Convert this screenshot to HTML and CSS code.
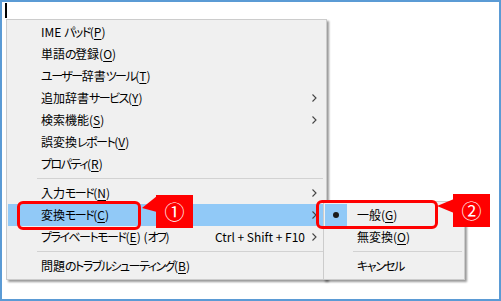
FILE: index.html
```html
<!DOCTYPE html>
<html lang="ja">
<head>
<meta charset="utf-8">
<link rel="stylesheet" href="styles.css">
</head>
<body>
<div class="screen">
  <div class="caret"></div>

  <div class="menu main-menu">
    <div class="item"><span class="label">IME <span class="kana">パッド</span>(<u>P</u>)</span></div>
    <div class="item"><span class="label">単語<span class="kana">の</span>登録(<u>O</u>)</span></div>
    <div class="item"><span class="label"><span class="kana">ユーザー</span>辞書<span class="kana">ツール</span>(<u>T</u>)</span></div>
    <div class="item"><span class="label">追加辞書<span class="kana">サービス</span>(<u>Y</u>)</span><span class="arrow"><svg width="5" height="8" viewBox="0 0 5 8"><path d="M0.5 0.5 L4 4 L0.5 7.5" fill="none" stroke="#444" stroke-width="1.1"/></svg></span></div>
    <div class="item"><span class="label">検索機能(<u>S</u>)</span><span class="arrow"><svg width="5" height="8" viewBox="0 0 5 8"><path d="M0.5 0.5 L4 4 L0.5 7.5" fill="none" stroke="#444" stroke-width="1.1"/></svg></span></div>
    <div class="item"><span class="label">誤変換<span class="kana">レポート</span>(<u>V</u>)</span></div>
    <div class="item"><span class="label"><span class="kana">プロパティ</span>(<u>R</u>)</span></div>
    <div class="sep"></div>
    <div class="item"><span class="label">入力<span class="kana">モード</span>(<u>N</u>)</span><span class="arrow"><svg width="5" height="8" viewBox="0 0 5 8"><path d="M0.5 0.5 L4 4 L0.5 7.5" fill="none" stroke="#444" stroke-width="1.1"/></svg></span></div>
    <div class="item active"><span class="label">変換<span class="kana">モード</span>(<u>C</u>)</span><span class="arrow"><svg width="5" height="8" viewBox="0 0 5 8"><path d="M0.5 0.5 L4 4 L0.5 7.5" fill="none" stroke="#444" stroke-width="1.1"/></svg></span></div>
    <div class="item"><span class="label"><span class="kana">プライベートモード</span>(<u>E</u>) (<span class="kana">オフ</span>)</span><span class="shortcut">Ctrl + Shift + F10</span><span class="arrow"><svg width="5" height="8" viewBox="0 0 5 8"><path d="M0.5 0.5 L4 4 L0.5 7.5" fill="none" stroke="#444" stroke-width="1.1"/></svg></span></div>
    <div class="sep"></div>
    <div class="item"><span class="label">問題<span class="kana">のトラブルシューティング</span>(<u>B</u>)</span></div>
  </div>

  <div class="menu sub-menu">
    <div class="sitem"><span class="check checked"><span class="dot"></span></span><span class="label">一般(<u>G</u>)</span></div>
    <div class="sitem"><span class="check"></span><span class="label">無変換(<u>O</u>)</span></div>
    <div class="ssep"></div>
    <div class="sitem"><span class="check"></span><span class="label"><span class="kana">キャンセル</span></span></div>
  </div>

  <div class="mark mark-1"></div>
  <div class="tag tag-1">①</div>
  <div class="mark mark-2"></div>
  <div class="tag tag-2">②</div>
</div>
</body>
</html>
```

FILE: styles.css
```css
* { box-sizing: border-box; }

html, body {
  margin: 0;
  padding: 0;
  background: #fff;
}

.screen {
  position: relative;
  width: 501px;
  height: 301px;
  border: 2px solid #5b9bd5;
  background: #fff;
  overflow: hidden;
  font-family: "Noto Sans CJK JP", "Noto Sans", sans-serif;
  font-size: 12px;
  font-feature-settings: "palt" 1;
  color: #000;
}

.caret {
  position: absolute;
  left: 3px;
  top: 1px;
  width: 2px;
  height: 15px;
  background: #000;
}

.menu {
  position: absolute;
  background: #f0f0f0;
  border: 1px solid #cccccc;
  box-shadow: 2px 2px 2px rgba(0, 0, 0, 0.4);
  display: flex;
  flex-direction: column;
}

.main-menu {
  left: 4px;
  top: 17px;
  width: 321px;
  padding: 1px 0 2px;
}

.item {
  display: flex;
  align-items: center;
  height: 22px;
  margin: 0 1px;
  padding: 0 8px 0 33px;
  line-height: 22px;
  white-space: nowrap;
}

.item.active {
  background: #91c9f7;
}

.label {
  flex: 1;
}

.kana {
  letter-spacing: -1.5px;
}

.label u {
  text-decoration-thickness: 1px;
  text-underline-offset: 2px;
}

.shortcut {
  margin-right: 7px;
}

.arrow {
  display: flex;
  align-items: center;
  width: 5px;
}

.sep {
  height: 1px;
  background: #d2d2d2;
  margin: 3px 3px 3px 30px;
}

.sub-menu {
  left: 321px;
  top: 199px;
  width: 142px;
  padding: 2px 0 2px;
}

.sitem {
  display: flex;
  align-items: center;
  height: 22px;
  margin: 0 1px;
  line-height: 22px;
  white-space: nowrap;
}

.check {
  width: 22px;
  height: 22px;
  margin-right: 10px;
  display: flex;
  align-items: center;
  justify-content: center;
}

.check.checked {
  background: #91c9f7;
}

.dot {
  width: 6px;
  height: 6px;
  border-radius: 50%;
  background: #1a1a1a;
}

.ssep {
  height: 1px;
  background: #d2d2d2;
  margin: 3px 2px 3px 29px;
}

.mark {
  position: absolute;
  border: 3px solid #ff0000;
  border-radius: 6px;
}

.mark-1 {
  left: 15px;
  top: 199px;
  width: 124px;
  height: 29px;
}

.mark-2 {
  left: 314px;
  top: 198px;
  width: 122px;
  height: 29px;
}

.tag {
  position: absolute;
  width: 37px;
  height: 33px;
  background: #ff0000;
  color: #fff;
  font-size: 20px;
  line-height: 33px;
  text-align: center;
}

.tag::before {
  content: "";
  position: absolute;
  background: #ff0000;
}

.tag-1 {
  left: 154px;
  top: 193px;
}

.tag-1::before {
  left: -14px;
  top: 1px;
  width: 15px;
  height: 16px;
  clip-path: polygon(100% 0, 0 75%, 100% 100%);
}

.tag-2 {
  left: 451px;
  top: 192px;
}

.tag-2::before {
  left: -16px;
  top: 5px;
  width: 17px;
  height: 14px;
  clip-path: polygon(100% 0, 0 50%, 100% 100%);
}
```
